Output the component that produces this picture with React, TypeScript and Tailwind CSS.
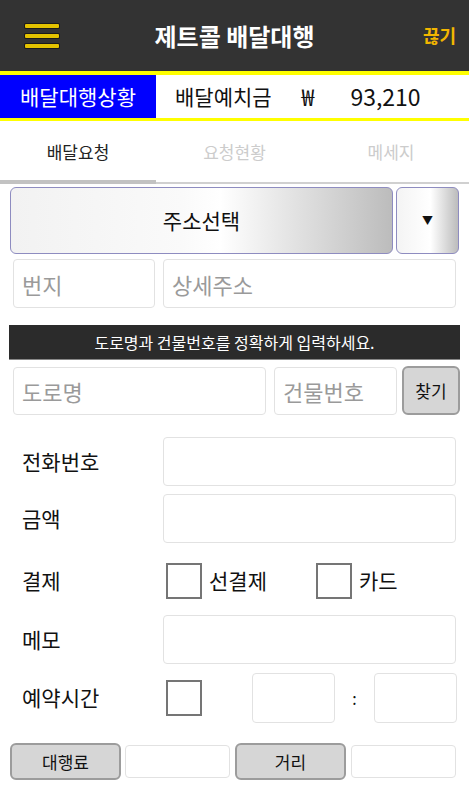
import React from 'react';

const font = { fontFamily: '"Noto Sans CJK KR", "Noto Sans", sans-serif' };

const Field: React.FC<{ className?: string; placeholder?: string }> = ({ className = '', placeholder }) => (
  <input
    placeholder={placeholder}
    className={`border border-[#e2e2e2] rounded-[4px] bg-white px-[8px] text-[22px] text-[#222] placeholder:text-[#9a9a9a] outline-none ${className}`}
  />
);

const GreyButton: React.FC<{ className?: string; children: React.ReactNode }> = ({ className = '', children }) => (
  <button className={`bg-[#d6d6d6] border-2 border-[#9c9c9c] rounded-[6px] text-[#111] flex items-center justify-center ${className}`}>
    {children}
  </button>
);

const Box: React.FC<{ className?: string }> = ({ className = '' }) => (
  <div className={`w-[36px] h-[36px] border-2 border-[#757575] bg-white ${className}`} />
);

const App: React.FC = () => {
  return (
    <div className="w-[469px] h-[800px] bg-white overflow-hidden" style={font}>
      {/* header */}
      <div className="h-[71px] bg-[#333333] flex items-center relative">
        <div className="ml-[25px] flex flex-col gap-[6px]">
          <span className="block w-[34px] h-[4px] bg-[#e3c200] rounded-[1px] shadow-[0_0_0_1px_#1a1a1a]" />
          <span className="block w-[34px] h-[4px] bg-[#e3c200] rounded-[1px] shadow-[0_0_0_1px_#1a1a1a]" />
          <span className="block w-[34px] h-[4px] bg-[#e3c200] rounded-[1px] shadow-[0_0_0_1px_#1a1a1a]" />
        </div>
        <h1 className="absolute left-0 right-0 text-center text-white text-[24px] font-bold pointer-events-none">제트콜 배달대행</h1>
        <span className="ml-auto mr-[13px] text-[#f2b600] text-[18px] font-bold">끊기</span>
      </div>

      {/* status row */}
      <div className="border-y-[4px] border-b-[3px] border-[#ffff00] h-[50px] flex items-stretch">
        <div className="w-[156px] bg-[#0000ff] text-white text-[21px] flex items-center justify-center">배달대행상황</div>
        <div className="flex items-center text-[21px] text-[#111]">
          <span className="ml-[19px]">배달예치금</span>
          <span className="ml-[30px] text-[23px]">₩</span>
          <span className="ml-[36px] text-[23px]">93,210</span>
        </div>
      </div>

      {/* tabs */}
      <div className="h-[63px] flex border-b-[2px] border-[#d0d0d0] relative">
        <div className="w-[156px] flex items-center justify-center text-[17px] text-[#222] relative">
          배달요청
          <div className="absolute left-0 right-0 bottom-[-2px] h-[4px] bg-[#c2c2c2]" />
        </div>
        <div className="w-[157px] flex items-center justify-center text-[17px] text-[#cccccc]">요청현황</div>
        <div className="flex-1 flex items-center justify-center text-[17px] text-[#cccccc]">메세지</div>
      </div>

      {/* address select */}
      <div className="flex mt-[3px] ml-[10px] gap-[3px]">
        <button className="w-[383px] h-[67px] rounded-[6px] border border-[#8e8cc0] bg-[linear-gradient(90deg,#f2f2f2_0%,#fafafa_45%,#ffffff_55%,#bcbcbc_100%)] text-[21px] text-[#111]">
          주소선택
        </button>
        <button className="w-[63px] h-[67px] rounded-[6px] border border-[#8e8cc0] bg-[linear-gradient(90deg,#f4f4f4_0%,#ffffff_55%,#bcbcbc_100%)] text-[11px] text-[#111]">
          ▼
        </button>
      </div>

      <div className="flex mt-[5px] ml-[13px] gap-[8px]">
        <Field className="w-[142px] h-[49px]" placeholder="번지" />
        <Field className="w-[293px] h-[49px]" placeholder="상세주소" />
      </div>

      <div className="mt-[17px] mx-[9px] h-[35px] bg-[#2b2b2b] border-b border-[#888] flex items-center justify-center text-white text-[16px]">
        도로명과 건물번호를 정확하게 입력하세요.
      </div>

      <div className="flex mt-[6px] ml-[13px] items-center">
        <Field className="w-[253px] h-[48px]" placeholder="도로명" />
        <Field className="w-[123px] h-[48px] ml-[8px]" placeholder="건물번호" />
        <GreyButton className="w-[58px] h-[49px] ml-[5px] text-[17px]">찾기</GreyButton>
      </div>

      {/* form */}
      <div className="flex items-center mt-[22px]">
        <span className="w-[163px] pl-[22px] text-[21px] text-[#111]">전화번호</span>
        <Field className="w-[293px] h-[49px]" />
      </div>
      <div className="flex items-center mt-[8px]">
        <span className="w-[163px] pl-[22px] text-[21px] text-[#111]">금액</span>
        <Field className="w-[293px] h-[49px]" />
      </div>
      <div className="flex items-center mt-[20px] h-[35px]">
        <span className="w-[166px] pl-[22px] text-[21px] text-[#111]">결제</span>
        <Box />
        <span className="ml-[7px] w-[107px] text-[21px] text-[#111]">선결제</span>
        <Box />
        <span className="ml-[7px] text-[21px] text-[#111]">카드</span>
      </div>
      <div className="flex items-center mt-[17px]">
        <span className="w-[163px] pl-[22px] text-[21px] text-[#111]">메모</span>
        <Field className="w-[293px] h-[49px]" />
      </div>
      <div className="flex items-center mt-[9px]">
        <span className="w-[166px] pl-[22px] text-[21px] text-[#111]">예약시간</span>
        <Box />
        <Field className="w-[83px] h-[50px] ml-[50px]" />
        <span className="w-[39px] text-center text-[16px] text-[#111]">:</span>
        <Field className="w-[83px] h-[50px]" />
      </div>

      {/* bottom */}
      <div className="flex items-center mt-[20px] ml-[10px]">
        <GreyButton className="w-[111px] h-[37px] text-[17px]">대행료</GreyButton>
        <Field className="w-[105px] h-[33px] ml-[4px]" />
        <GreyButton className="w-[111px] h-[37px] ml-[5px] text-[17px]">거리</GreyButton>
        <Field className="w-[105px] h-[33px] ml-[5px]" />
      </div>
    </div>
  );
};

export default App;
